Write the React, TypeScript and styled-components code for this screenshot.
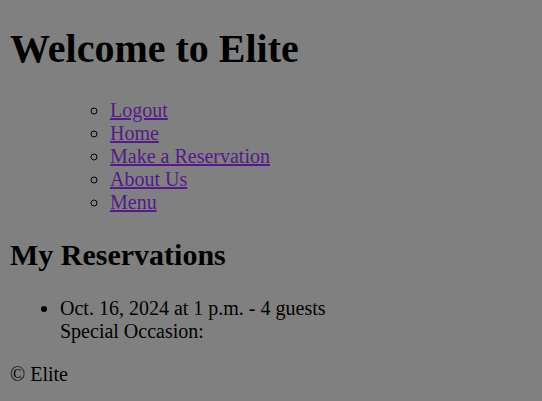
import React from "react";
import styled, { createGlobalStyle } from "styled-components";

const GlobalStyle = createGlobalStyle`
  html, body {
    background: #808080;
  }
  body {
    margin: 10px;
    font-family: "Liberation Serif", "Times New Roman", serif;
    font-size: 20px;
    color: #000;
  }
`;

const Title = styled.h1`
  font-size: 40px;
  font-weight: bold;
  margin: 14.8px 0 26.8px;
`;

const NavList = styled.ul`
  list-style-type: circle;
  margin: 20px 0;
  padding-left: 100px;
`;

const NavLink = styled.a`
  color: #551a8b;
  text-decoration: underline;
`;

const SectionTitle = styled.h2`
  font-size: 30px;
  font-weight: bold;
  margin: 24.9px 0;
`;

const ReservationList = styled.ul`
  list-style-type: disc;
  margin: 20px 0;
  padding-left: 50px;
`;

const FooterText = styled.p`
  margin: 20px 0;
`;

const links = ["Logout", "Home", "Make a Reservation", "About Us", "Menu"];

export default function App() {
  return (
    <>
      <GlobalStyle />
      <header>
        <Title>Welcome to Elite</Title>
        <nav>
          <NavList>
            {links.map((l) => (
              <li key={l}>
                <NavLink href="#">{l}</NavLink>
              </li>
            ))}
          </NavList>
        </nav>
      </header>
      <main>
        <SectionTitle>My Reservations</SectionTitle>
        <ReservationList>
          <li>
            Oct. 16, 2024 at 1 p.m. - 4 guests
            <br />
            Special Occasion:
          </li>
        </ReservationList>
      </main>
      <footer>
        <FooterText>© Elite</FooterText>
      </footer>
    </>
  );
}
